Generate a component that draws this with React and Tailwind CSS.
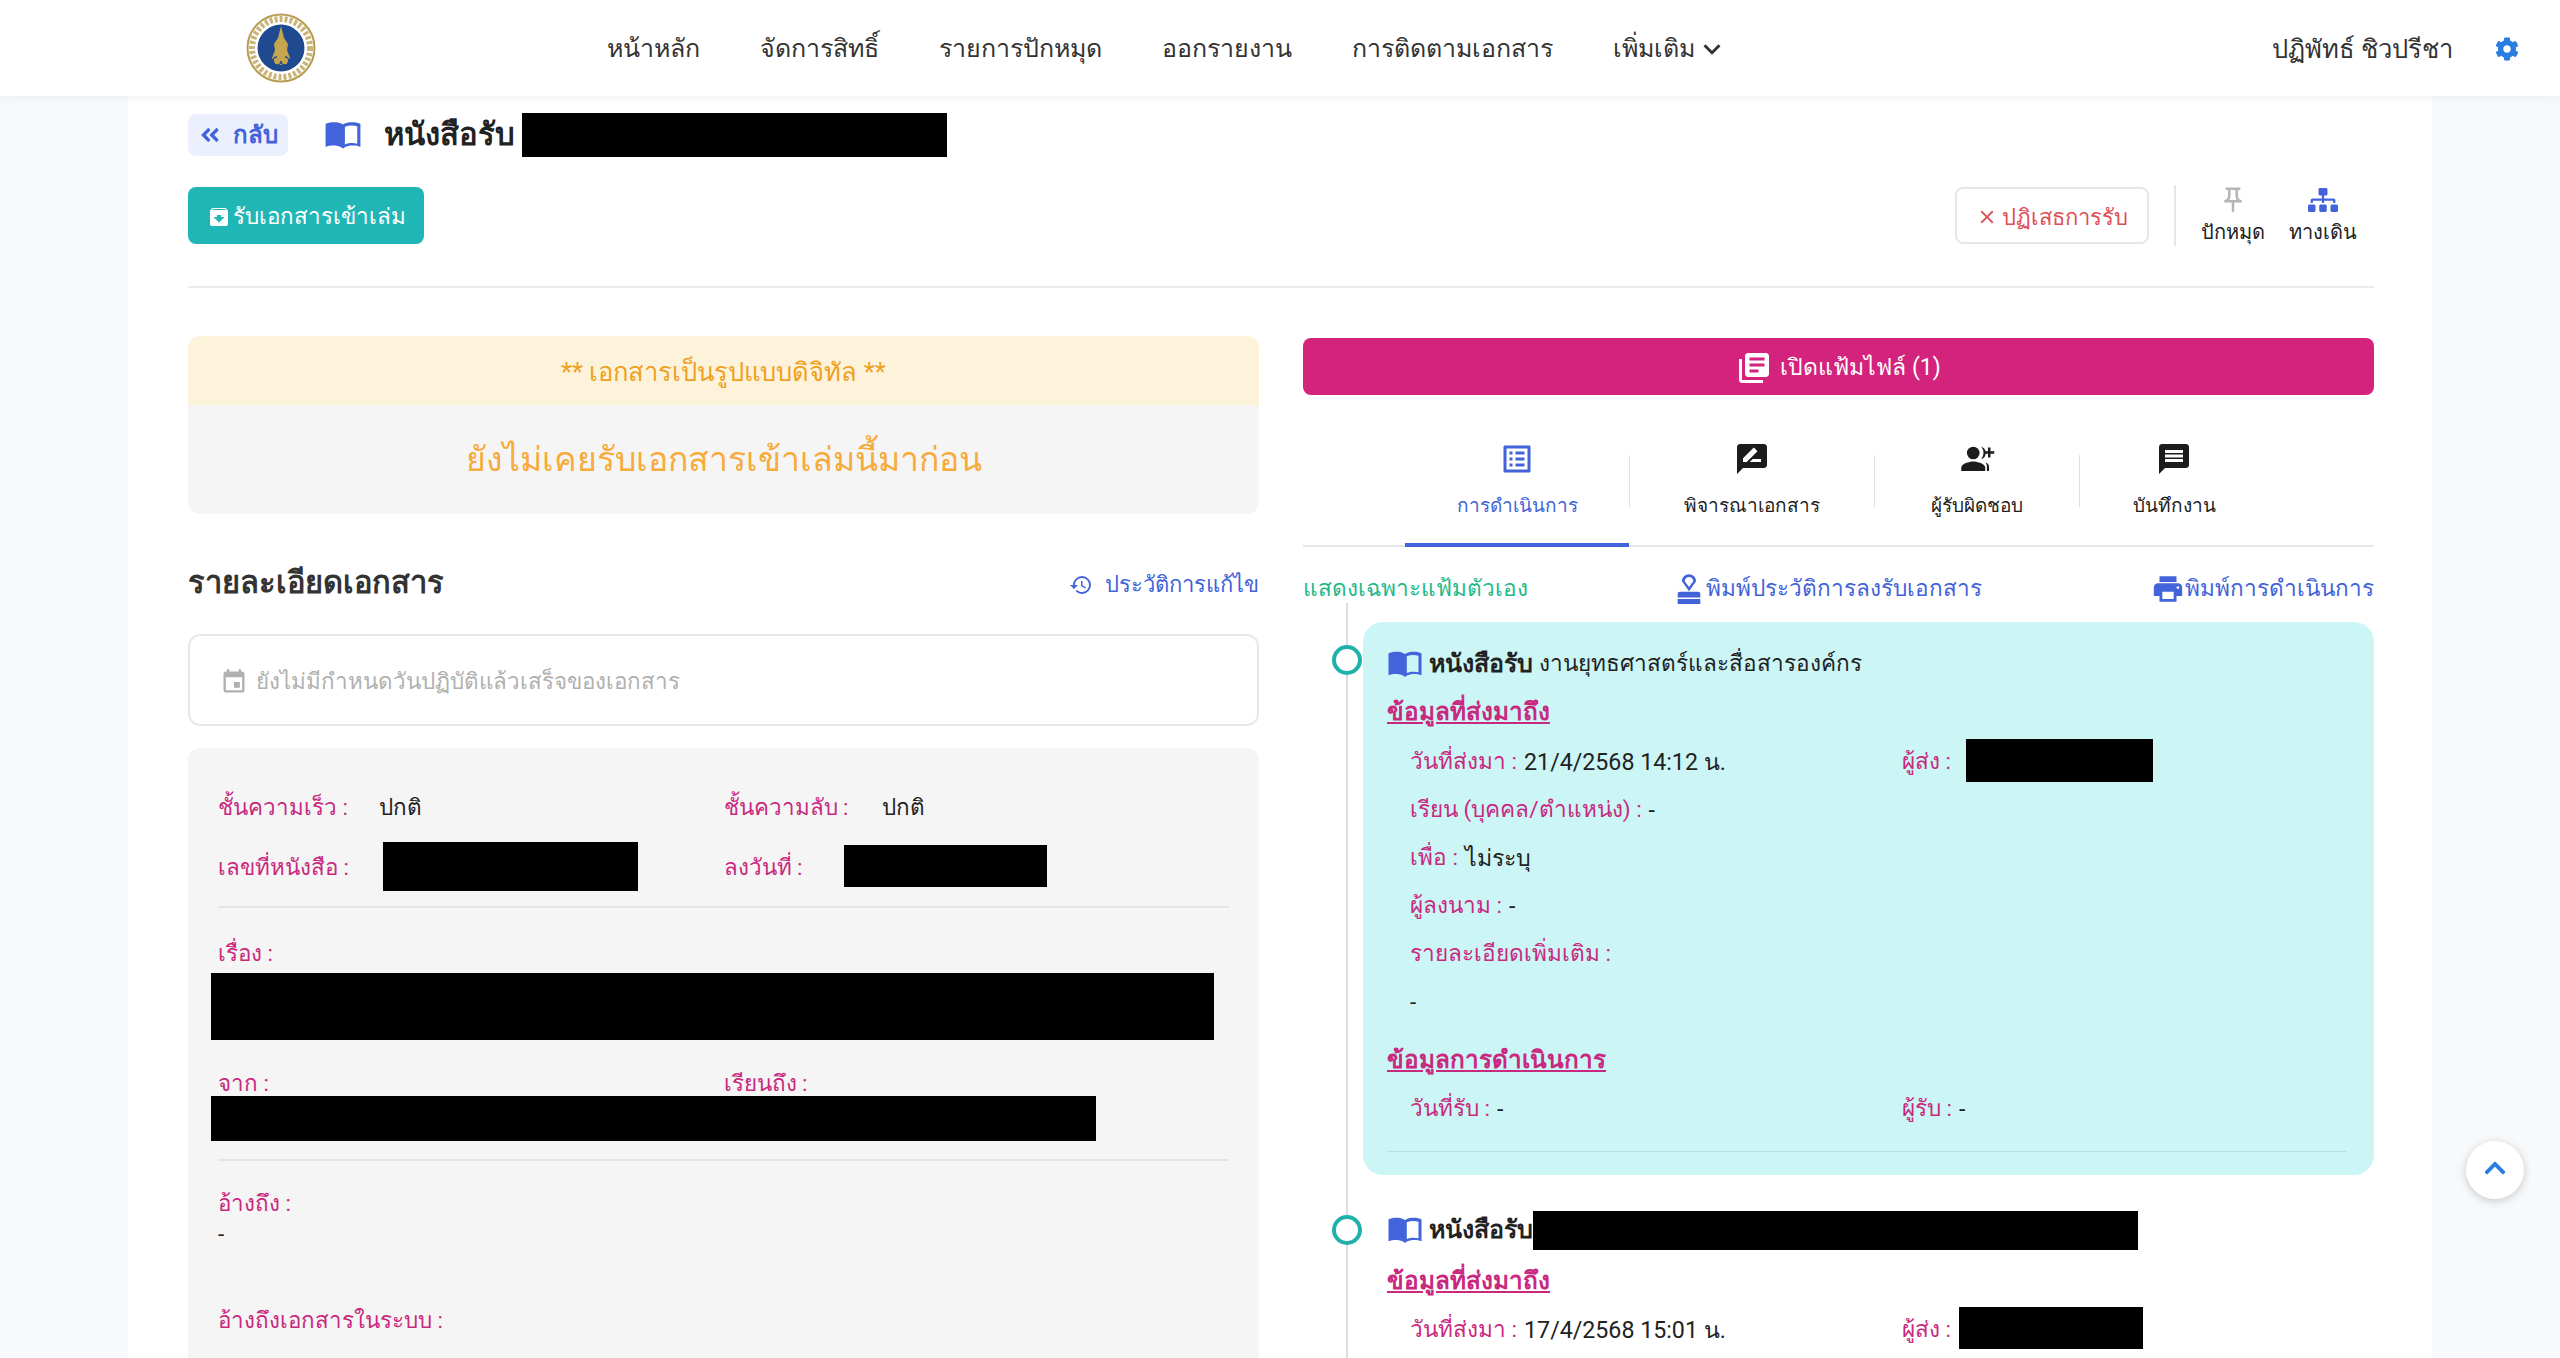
import {
  MdArchive, MdClose, MdOutlinePushPin, MdHistory, MdEvent,
  MdLibraryBooks, MdListAlt, MdRateReview, MdMessage, MdPrint, MdKeyboardArrowDown,
} from 'react-icons/md'
import { FaSitemap, FaCog, FaChevronUp, FaAngleDoubleLeft } from 'react-icons/fa'

function GroupAddIcon({ className }) {
  return (
    <svg className={className} viewBox="0 0 24 24" fill="currentColor">
      <circle cx="9.500" cy="8" r="4.200" />
      <path d="M1.500 20v-2.200c0-2.800 5.300-4.200 8-4.200s8 1.400 8 4.200V20z" />
      <path d="M14.800 3.900a4.300 4.300 0 0 1 0 8.200 6.200 6.200 0 0 0 0-8.200z" />
      <path d="M17.600 14c1.500.7 2.400 1.800 2.400 3.200V20h-1.400v-2.600c0-1.300-.4-2.500-1-3.400z" />
      <path d="M21 6.800V4.300h-1.700v2.500h-2.500v1.700h2.500V11H21V8.500h2.500V6.800z" />
    </svg>
  )
}

const navItems = ['หน้าหลัก', 'จัดการสิทธิ์', 'รายการปักหมุด', 'ออกรายงาน', 'การติดตามเอกสาร']
const tabs = [
  { label: 'การดำเนินการ', Icon: MdListAlt, active: true, w: 'w-[224px]' },
  { label: 'พิจารณาเอกสาร', Icon: MdRateReview, w: 'w-[245px]' },
  { label: 'ผู้รับผิดชอบ', Icon: GroupAddIcon, w: 'w-[205px]' },
  { label: 'บันทึกงาน', Icon: MdMessage, w: 'w-[190px]' },
]

function Logo() {
  return (
    <svg width="70" height="70" viewBox="0 0 70 70">
      <circle cx="35" cy="35" r="33.5" fill="#fff" stroke="#b89b4e" strokeWidth="2" />
      <circle cx="35" cy="35" r="29" fill="none" stroke="#c9b47a" strokeWidth="6" strokeDasharray="3 2" />
      <circle cx="35" cy="35" r="23.5" fill="#1f4a8f" />
      <path d="M35 13l3 12 4 6-1 6 3 8-4 7h-10l-4-7 3-8-1-6 4-6z" fill="#c5a64f" />
      <path d="M31 44a4 4 0 1 0 4 4 4 4 0 1 0 4-4" fill="none" stroke="#1f4a8f" strokeWidth="1.5" />
    </svg>
  )
}

// open book: left page solid, right page outlined
function BookIcon({ className }) {
  return (
    <svg className={className} viewBox="0 0 24 24" fill="#4263d9">
      <path d="M1 5c2-1.2 7-1.6 10-.2L12 5.300l1-.5c3-1.400 8-1 10 .2v14.500c-3-1.200-7.500-1.200-10 .4L12 20.600l-1-.7c-2.500-1.600-7-1.600-10-.4zM13.200 6.800v11.200c2.300-1 5.300-1.100 7.800-.5V6.500c-2.500-.7-5.500-.6-7.800.3z" />
    </svg>
  )
}

function StampIcon({ className }) {
  return (
    <svg className={className} viewBox="0 0 24 24" fill="currentColor">
      <path d="M4 15.500c0-1 .8-1.500 1.500-1.500h13c.7 0 1.500.5 1.500 1.500V18H4zM4 19h16v3.500H4z" />
      <path fillRule="evenodd" d="M12 1.500C9.240 1.500 7 3.740 7 6.500l5 7 5-7c0-2.760-2.240-5-5-5zm0 9L9 6.500c0-1.660 1.340-3 3-3s3 1.340 3 3z" />
    </svg>
  )
}

function Redact({ className }) {
  return <div className={`bg-black shrink-0 ${className}`} />
}

function Label({ children }) {
  return <span className="text-[#c9287f] pt-[4px]">{children}</span>
}

function Value({ children, className = 'ml-[6px]' }) {
  return <span className={`text-[#222] pt-[4px] ${className}`}>{children}</span>
}

function Field({ label, value }) {
  return (
    <div className="flex items-center h-[48px]">
      <Label>{label} :</Label>
      {value && <Value className="ml-[7px] text-[23.200px]">{value}</Value>}
    </div>
  )
}

function Heading({ children, className = 'h-[48px]' }) {
  return <div className={`flex items-center pt-[3px] font-bold text-[24.300px] text-[#c9287f] underline underline-offset-2 ${className}`}>{children}</div>
}

export default function App() {
  return (
    <div className="h-screen overflow-hidden bg-[#f8f9fa] text-[22px] text-[#222]" style={{ fontFamily: 'Roboto, sans-serif' }}>
      {/* Navbar */}
      <header className="relative z-10 h-[96px] bg-white shadow-[0_2px_10px_rgba(0,0,0,0.05)] flex items-center">
        <div className="ml-[246px] w-[70px]"><Logo /></div>
        <nav className="ml-[291px] pt-[2px] flex items-center gap-[60px] text-[25px] text-[#333]">
          {navItems.map((n) => <span key={n}>{n}</span>)}
          <span className="flex items-center">เพิ่มเติม<MdKeyboardArrowDown className="text-[34px]" /></span>
        </nav>
        <div className="ml-auto pt-[2px] flex items-center mr-[41px] text-[25.600px] text-[#333]">
          <span>ปฏิพัทธ์ ชิวปรีชา</span>
          <FaCog className="ml-[42px] text-[#2a7de1] text-[24px]" />
        </div>
      </header>

      {/* Page */}
      <main className="mx-[128px] bg-white h-[1262px] pl-[60px] pr-[58px] overflow-hidden">
        {/* Title row */}
        <div className="flex items-center h-[44px] mt-[17px]">
          <button className="w-[100px] h-[42px] rounded-[8px] bg-[#ecf0fd] text-[#4263d9] font-bold text-[24px] flex items-center justify-center">
            <FaAngleDoubleLeft className="text-[22px]" /><span className="ml-[12px]">กลับ</span>
          </button>
          <BookIcon className="ml-[36px] w-[38px] h-[38px]" />
          <span className="ml-[22px] font-bold text-[31px] text-[#222]">หนังสือรับ</span>
          <Redact className="ml-[7px] w-[425px] h-[44px]" />
        </div>

        {/* Actions */}
        <div className="flex items-center mt-[28px] h-[61px]">
          <button className="w-[236px] h-[57px] pt-[3px] rounded-[8px] bg-[#20b6b6] text-white font-medium flex items-center justify-center text-[22.400px]">
            <MdArchive className="text-[24px] mr-[2px]" />รับเอกสารเข้าเล่ม
          </button>
          <div className="ml-auto flex items-center">
            <button className="w-[194px] h-[57px] pt-[3px] rounded-[8px] border-2 border-[#e6e6e6] text-[#dc4f55] text-[22px] flex items-center justify-center">
              <MdClose className="mr-[4px] text-[22px]" />ปฏิเสธการรับ
            </button>
            <div className="ml-[25px] w-[2px] h-[61px] bg-[#e6e6e6]" />
            <div className="ml-[20px] w-[74px] flex flex-col items-center text-[20px] font-medium">
              <MdOutlinePushPin className="text-[30px] text-[#b5b5b5]" /><span className="mt-[2px]">ปักหมุด</span>
            </div>
            <div className="ml-[16px] mr-[14px] w-[74px] flex flex-col items-center text-[20px] font-medium">
              <FaSitemap className="text-[30px] text-[#4263d9]" /><span className="mt-[2px]">ทางเดิน</span>
            </div>
          </div>
        </div>
        <div className="h-[2px] bg-[#ebebeb] mt-[40px]" />

        <div className="flex gap-[44px] mt-[48px]">
          {/* Left column */}
          <section className="w-[1071px] shrink-0">
            <div className="rounded-[12px] overflow-hidden">
              <div className="h-[69px] pt-[3px] bg-[#fdf3da] text-[#f0a020] text-[25.600px] flex items-center justify-center">** เอกสารเป็นรูปแบบดิจิทัล **</div>
              <div className="h-[109px] pt-[1px] bg-[#f5f5f5] text-[#f7ab3a] text-[33.800px] font-medium flex items-center justify-center">ยังไม่เคยรับเอกสารเข้าเล่มนี้มาก่อน</div>
            </div>
            <div className="flex items-center justify-between mt-[46px] h-[46px]">
              <h2 className="font-bold text-[30.800px] text-[#333]">รายละเอียดเอกสาร</h2>
              <span className="flex items-center pt-[3px] text-[#4263d9] text-[22px]"><MdHistory className="mr-[12px] text-[24px]" />ประวัติการแก้ไข</span>
            </div>
            <div className="mt-[28px] h-[92px] pt-[3px] rounded-[12px] border-2 border-[#e8e8e8] flex items-center pl-[30px] text-[#b0b0b0] text-[22.400px]">
              <MdEvent className="text-[28px] mr-[8px]" />ยังไม่มีกำหนดวันปฏิบัติแล้วเสร็จของเอกสาร
            </div>
            <div className="mt-[22px] h-[700px] rounded-t-[12px] bg-[#f5f5f5] pt-[34px] px-[30px] text-[22.400px]">
              <div className="grid grid-cols-2">
                <div className="flex items-center h-[48px]"><Label>ชั้นความเร็ว :</Label><Value className="ml-[31px]">ปกติ</Value></div>
                <div className="flex items-center h-[48px]"><Label>ชั้นความลับ :</Label><Value className="ml-[34px]">ปกติ</Value></div>
                <div className="flex items-center h-[60px] mt-[6px]"><Label>เลขที่หนังสือ :</Label><Redact className="ml-[34px] w-[255px] h-[49px]" /></div>
                <div className="flex items-center h-[60px] mt-[6px]"><Label>ลงวันที่ :</Label><Redact className="ml-[42px] w-[203px] h-[42px]" /></div>
              </div>
              <div className="h-[2px] bg-[#e5e5e5] mt-[10px]" />
              <div className="h-[42px] mt-[23px] flex items-center"><Label>เรื่อง :</Label></div>
              <Redact className="ml-[-7px] w-[1003px] h-[67px]" />
              <div className="grid grid-cols-2 mt-[28px]">
                <div className="h-[28px] flex items-center"><Label>จาก :</Label></div>
                <div className="h-[28px] flex items-center"><Label>เรียนถึง :</Label></div>
              </div>
              <Redact className="ml-[-7px] w-[885px] h-[45px]" />
              <div className="h-[2px] bg-[#e5e5e5] mt-[18px]" />
              <div className="h-[42px] mt-[20px] flex items-center"><Label>อ้างถึง :</Label></div>
              <div className="h-[32px] mt-[-6px] flex items-center"><Value className="">-</Value></div>
              <div className="h-[42px] mt-[49px] flex items-center"><Label>อ้างถึงเอกสารในระบบ :</Label></div>
            </div>
          </section>

          {/* Right column */}
          <section className="flex-1 min-w-0 text-[22.600px]">
            <button className="w-full h-[57px] mt-[2px] pt-[3px] rounded-[8px] bg-[#d3237d] text-white text-[23px] flex items-center justify-center">
              <MdLibraryBooks className="text-[36px] mr-[8px]" />เปิดแฟ้มไฟล์ (1)
            </button>
            <div className="flex h-[152px] pl-[102px] border-b-2 border-[#e6e6e6]">
              {tabs.map(({ label, Icon, active, w }, i) => (
                <div key={label} className={`relative h-[152px] pt-[46px] ${w} flex flex-col items-center ${active ? 'border-b-[4px] border-[#4263d9]' : ''}`}>
                  <Icon className={`w-[36px] h-[36px] ${active ? 'text-[#4263d9]' : 'text-[#1c1c1c]'}`} />
                  <span className={`mt-[15px] text-[19px] ${active ? 'text-[#4263d9]' : 'text-[#222]'}`}>{label}</span>
                  {i < 3 && <div className="absolute right-[-1px] top-[60px] w-[1px] h-[52px] bg-[#e0e0e0]" />}
                </div>
              ))}
            </div>
            <div className="flex items-center justify-between h-[56px] mt-[14px]">
              <span className="text-[#1fb98a]">แสดงเฉพาะแฟ้มตัวเอง</span>
              <span className="flex items-center text-[#4263d9] ml-[-26px]"><StampIcon className="w-[34px] h-[34px]" />พิมพ์ประวัติการลงรับเอกสาร</span>
              <span className="flex items-center text-[#4263d9]"><MdPrint className="text-[34px]" />พิมพ์การดำเนินการ</span>
            </div>

            {/* Timeline */}
            <div className="relative ml-[43px] pl-[15px] border-l-2 border-[#d8dde0] h-[800px] mt-[-14px] pt-[19px]">
              <div className="relative bg-[#ccf6f6] rounded-[20px] h-[553px] px-[24px] pt-[20px]">
                <div className="absolute left-[-31px] top-[23px] w-[30px] h-[30px] rounded-full border-[4px] border-[#20b2aa] bg-white" />
                <div className="flex items-center h-[44px]">
                  <BookIcon className="w-[36px] h-[36px]" />
                  <span className="ml-[6px] font-bold text-[25px]">หนังสือรับ</span>
                  <span className="ml-[6px]">งานยุทธศาสตร์และสื่อสารองค์กร</span>
                </div>
                <Heading className="h-[50px]">ข้อมูลที่ส่งมาถึง</Heading>
                <div className="pl-[23px]">
                  <div className="grid grid-cols-2 w-[984px]">
                    <Field label="วันที่ส่งมา" value="21/4/2568 14:12 น." />
                    <div className="flex items-center h-[48px]"><Label>ผู้ส่ง :</Label><Redact className="ml-[15px] w-[187px] h-[43px]" /></div>
                  </div>
                  <Field label="เรียน (บุคคล/ตำแหน่ง)" value="-" />
                  <Field label="เพื่อ" value="ไม่ระบุ" />
                  <Field label="ผู้ลงนาม" value="-" />
                  <Field label="รายละเอียดเพิ่มเติม" />
                  <div className="h-[49px] flex items-center"><Value className="">-</Value></div>
                </div>
                <div className="mt-[10px]"><Heading>ข้อมูลการดำเนินการ</Heading></div>
                <div className="pl-[23px] grid grid-cols-2 w-[1007px]">
                  <Field label="วันที่รับ" value="-" />
                  <Field label="ผู้รับ" value="-" />
                </div>
                <div className="h-[1px] bg-[#b9dede] mt-[20px] mr-[4px]" />
              </div>
              <div className="relative px-[24px] mt-[35px]">
                <div className="absolute left-[-31px] top-[5px] w-[30px] h-[30px] rounded-full border-[4px] border-[#20b2aa] bg-white" />
                <div className="flex items-center h-[40px]">
                  <BookIcon className="w-[36px] h-[36px]" />
                  <span className="ml-[6px] font-bold text-[25px]">หนังสือรับ</span>
                  <Redact className="w-[605px] h-[39px]" />
                </div>
                <Heading className="h-[48px] mt-[6px]">ข้อมูลที่ส่งมาถึง</Heading>
                <div className="pl-[23px] grid grid-cols-2 w-[1007px]">
                  <Field label="วันที่ส่งมา" value="17/4/2568 15:01 น." />
                  <div className="flex items-center h-[48px]"><Label>ผู้ส่ง :</Label><Redact className="ml-[8px] w-[184px] h-[42px]" /></div>
                </div>
              </div>
            </div>
          </section>
        </div>
      </main>

      {/* Scroll to top */}
      <button className="fixed left-[2466px] top-[1141px] w-[58px] h-[58px] rounded-full bg-white shadow-[0_2px_10px_rgba(0,0,0,0.2)] flex items-center justify-center">
        <FaChevronUp className="text-[24px] text-[#2a7de1] mb-[4px]" />
      </button>
    </div>
  )
}
